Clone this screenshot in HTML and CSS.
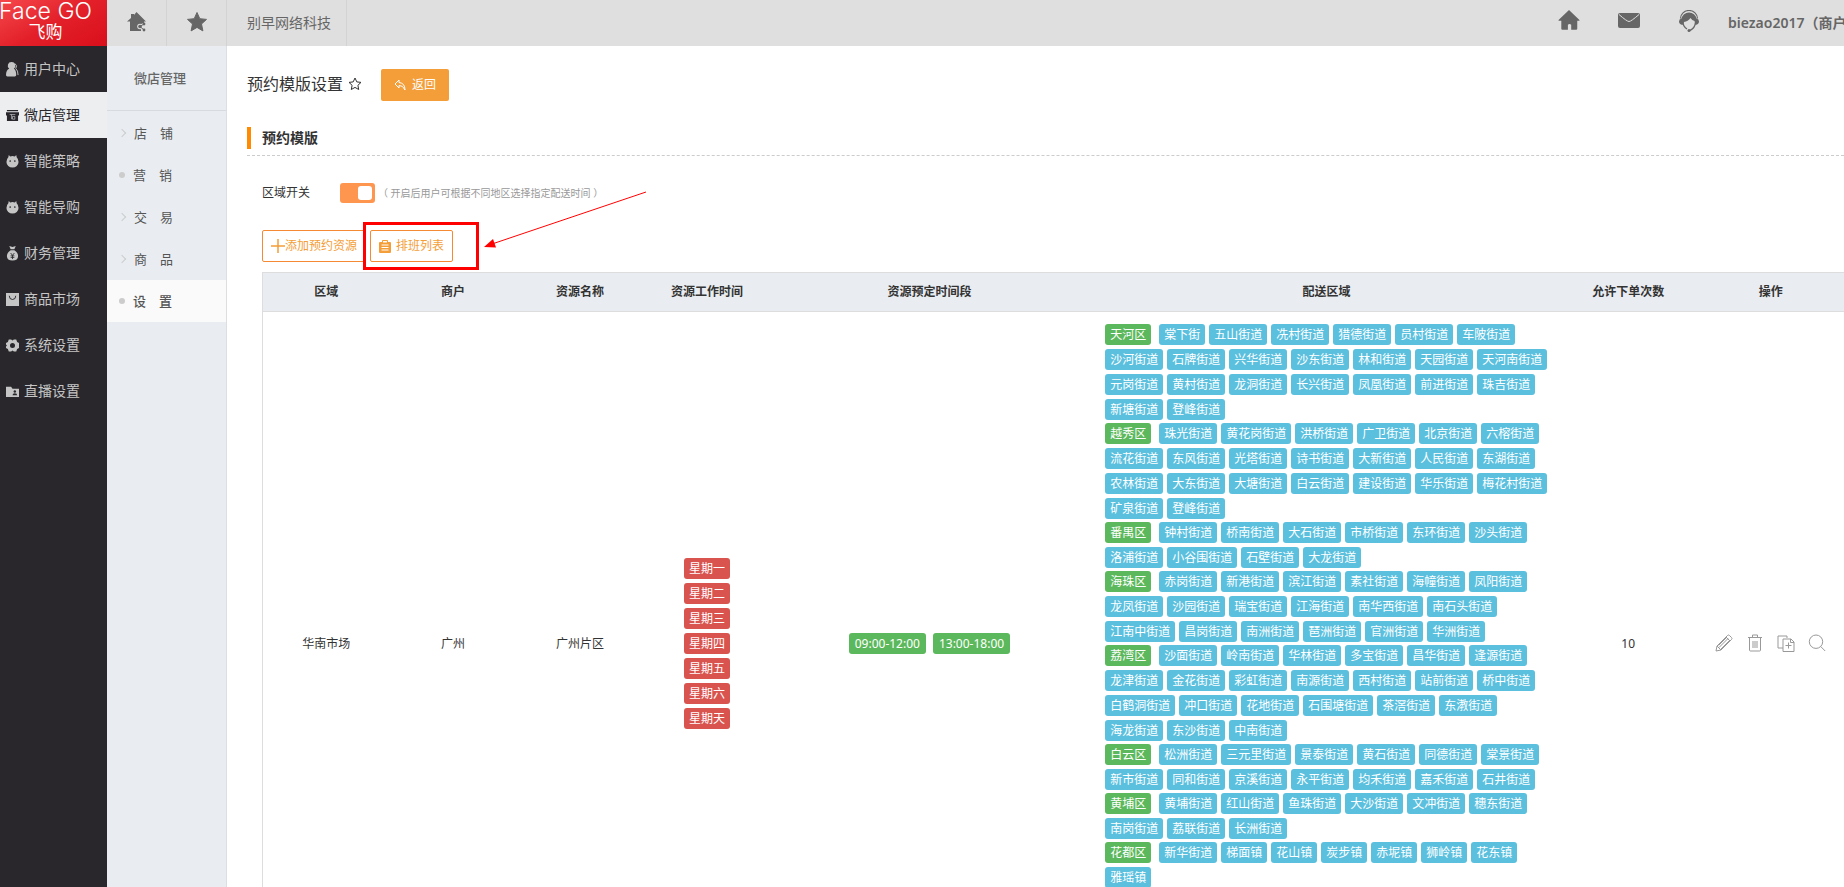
FILE: index.html
```
<!DOCTYPE html>
<html lang="zh-CN">
<head>
  <meta charset="UTF-8">
  <meta name="viewport" content="width=device-width, initial-scale=1.0">
  <title>预约模版设置</title>
  <link rel="stylesheet" href="styles.css">
</head>
<body>
  <div class="page">
    <!-- 左侧主菜单 -->
    <aside class="sidebar">
      <a class="logo" href="#">
        <span class="logo-en">Face GO</span>
        <span class="logo-cn">飞购</span>
      </a>
      <nav class="main-nav">
        <a href="#"><svg viewBox="0 0 14 16"><path d="M6 0a4 4 0 0 1 2.500 7.200Q11 8.500 11 14q0 1.500-1.500 1.500h-8Q0 15.500 0 14q0-5.500 3.500-6.800A4 4 0 0 1 6 0z"/><path d="M9.500 1.500a4 4 0 0 1 1 5.500q2.500 2 2.500 7" fill="none" stroke="currentColor"/></svg>用户中心</a>
        <a href="#" class="active"><svg viewBox="0 0 14 14"><path d="M1 1h12v1.500H1zM0 3.500h14V7h-1v6H1V7H0z"/><path d="M6 6v5M4 6h6M7 8h2.500v3H7z" fill="none" stroke="#eceef0" stroke-width=".6"/></svg>微店管理</a>
        <a href="#"><svg viewBox="0 0 14 14"><path d="M3 0l1.500 1.500Q7 .5 9.500 1.500L11 0l.5 2.500q2 2 2 5a6.500 6 0 0 1-13 0q0-3 2-5z"/><circle cx="4.500" cy="6.500" r=".9" fill="#29272b"/><circle cx="9.500" cy="6.500" r=".9" fill="#29272b"/></svg>智能策略</a>
        <a href="#"><svg viewBox="0 0 14 14"><path d="M3 0l1.500 1.500Q7 .5 9.500 1.500L11 0l.5 2.500q2 2 2 5a6.500 6 0 0 1-13 0q0-3 2-5z"/><circle cx="4.500" cy="6.500" r=".9" fill="#29272b"/><circle cx="9.500" cy="6.500" r=".9" fill="#29272b"/></svg>智能导购</a>
        <a href="#"><svg viewBox="0 0 14 16"><path d="M3.500 0L7 1l3.500-1L9 3.500H5zM5 4.500h4Q13 7 13 11q0 4.500-6 4.500T1 11q0-4 4-6.500z"/><path d="M5 7.500l2 2.500 2-2.500M7 10v4M5 10.500h4M5 12.200h4" fill="none" stroke="#29272b" stroke-width=".9"/></svg>财务管理</a>
        <a href="#"><svg viewBox="0 0 14 14"><path d="M0 0h14v14H0z"/><path d="M3.500 3q0 4 3.500 4t3.500-4" fill="none" stroke="#29272b"/></svg>商品市场</a>
        <a href="#"><svg viewBox="0 0 14 14"><path fill-rule="evenodd" d="M3 .5h2.500l1.500 1.200L8.500.5H11l1 2.700 2 1v5.600l-2 1-1 2.700H8.500L7 12.300l-1.500 1.200H3l-1-2.700-2-1V8l1-1-1-1V4.200l2-1zM7 4.300a2.700 2.700 0 1 0 0 5.400 2.700 2.700 0 0 0 0-5.400z"/></svg>系统设置</a>
        <a href="#"><svg viewBox="0 0 14 14"><path d="M0 2h5.500L7 4h7v9H0z"/><circle cx="9.500" cy="7" r="1.300" fill="#29272b"/><path d="M7 11q0-2 2.500-2t2.500 2z" fill="#29272b"/></svg>直播设置</a>
      </nav>
    </aside>

    <div class="wrapper">
      <!-- 顶部栏 -->
      <header class="topbar">
        <a href="#" class="top-tab tab-home" title="店铺首页"><svg viewBox="0 0 20 20"><path d="M9.500 0L19 9.500h-2V11a4 4 0 0 0-3 6.500v1.500H3V9.500H0L4 6V2h3v1z"/><circle cx="13" cy="14.500" r="2.800" fill="#dfdfdf"/><circle cx="13" cy="14.500" r="1.800"/><circle cx="17" cy="12" r="1.400"/><circle cx="17" cy="18" r="1.400"/><path d="M17 12l-4 2.500 4 3.500" fill="none" stroke="currentColor"/></svg></a>
        <a href="#" class="top-tab" title="收藏"><svg viewBox="0 0 20 20"><path d="M10 .5l2.800 6.200 6.700.7-5 4.600 1.400 6.900-5.900-3.500-5.900 3.500L5.500 12l-5-4.600 6.700-.7z" stroke="currentColor" stroke-linejoin="round"/></svg></a>
        <a href="#" class="top-company">别早网络科技</a>
        <div class="top-right">
          <a href="#" title="首页"><svg viewBox="0 0 20 20"><path d="M10 0l9.500 9q.5.800-1 .8h-1V17q0 1-1 1H12v-4.500a2 2 0 0 0-3 0V18H4q-1 0-1-1V9.800H1.500q-1.500 0-1-.8z"/></svg></a>
          <a href="#" title="消息"><svg viewBox="0 0 22 20"><rect x="0" y="2" width="22" height="15" rx="2"/><path d="M1 3.500q8 7 10 7t10-7" fill="none" stroke="#dfdfdf"/></svg></a>
          <a href="#" title="客服"><svg viewBox="0 0 22 22"><path d="M2.500 8.500a8.500 8 0 0 1 17 0" fill="none" stroke="currentColor" stroke-width="1.200"/><path d="M11 2.500a7.500 7 0 0 1 7.500 6q2.500.5 2.500 3t-3.500 3.500L16.500 11Q14 10.500 12.500 8 10 11.500 6 12l-1.500 3Q1 14 1 11.500t2.500-3a7.500 7 0 0 1 7.500-6z"/><path d="M5 12q0 4.500 4 7M17.500 12.500Q17 18 12 20.500" fill="none" stroke="currentColor" stroke-width="1.400"/><circle cx="11" cy="20.500" r="1.500"/></svg></a>
          <span class="user">biezao2017（商户）</span>
        </div>
      </header>

      <div class="body">
        <!-- 二级菜单 -->
        <nav class="sub-nav">
          <h2>微店管理</h2>
          <a href="#" class="arrow">店　铺</a>
          <a href="#" class="dot">营　销</a>
          <a href="#" class="arrow">交　易</a>
          <a href="#" class="arrow">商　品</a>
          <a href="#" class="dot active">设　置</a>
        </nav>

        <main class="content">
          <div class="page-title">
            <h1>预约模版设置</h1>
            <svg class="star" viewBox="0 0 14 14"><path d="M7 1l1.800 3.900 4.200.5-3.100 2.900.8 4.200L7 10.400l-3.700 2.100.8-4.200L1 5.400l4.200-.5z"/></svg>
            <button type="button" class="btn-back"><svg viewBox="0 0 12 12"><path d="M5 1L1 5l4 4V6.500q4-.5 6 4.500 0-7-6-7.500z"/></svg>返回</button>
          </div>

          <h3 class="section-title"><span>预约模版</span></h3>

          <div class="panel">
            <div class="switch-row">
              <label for="area-switch">区域开关</label>
              <input type="checkbox" id="area-switch" class="switch" checked>
              <span class="hint">（ 开启后用户可根据不同地区选择指定配送时间 ）</span>
            </div>

            <div class="toolbar">
              <button type="button" class="btn-line btn-add"><svg viewBox="0 0 14 14"><path d="M7 0v14M0 7h14" fill="none" stroke="currentColor" stroke-width="1.500"/></svg>添加预约资源</button>
              <div class="marked">
                <button type="button" class="btn-line btn-list"><svg viewBox="0 0 12 14"><path fill-rule="evenodd" d="M0 4q0-1 1-1h2V2q0-1 1-1h4q1 0 1 1v1h2q1 0 1 1v9q0 1-1 1H1q-1 0-1-1zM4 2v1.500h4V2zM2.500 5.500v1h7v-1zM2.500 8v1h7V8zM2.500 10.500v1h7v-1z"/></svg>排班列表</button>
                <div class="mark-box"></div>
                <svg class="mark-arrow" viewBox="0 0 164 58"><path d="M162 1L8 53" fill="none" stroke="#f00"/><path d="M0 56l9-8 3 8.500z" fill="#f00"/></svg>
              </div>
            </div>

            <table class="resource-table">
              <thead>
                <tr>
                  <th class="w8">区域</th>
                  <th class="w8">商户</th>
                  <th class="w8">资源名称</th>
                  <th class="w8">资源工作时间</th>
                  <th class="w20">资源预定时间段</th>
                  <th class="w30">配送区域</th>
                  <th class="w8">允许下单次数</th>
                  <th class="w10">操作</th>
                </tr>
              </thead>
              <tbody>
                <tr>
                  <td>华南市场</td>
                  <td>广州</td>
                  <td>广州片区</td>
                  <td>
                    <div class="days">
                      <span class="tag red">星期一</span>
                      <span class="tag red">星期二</span>
                      <span class="tag red">星期三</span>
                      <span class="tag red">星期四</span>
                      <span class="tag red">星期五</span>
                      <span class="tag red">星期六</span>
                      <span class="tag red">星期天</span>
                    </div>
                  </td>
                  <td>
                    <div class="times">
                      <span class="tag green">09:00-12:00</span>
                      <span class="tag green">13:00-18:00</span>
                    </div>
                  </td>
                  <td class="areas" id="areas"></td>
                  <td>10</td>
                  <td>
                    <div class="actions">
                      <a href="#" title="编辑"><svg viewBox="0 0 18 18"><path d="M1 17l1-5L12.500 1.500q1-1 2 0l2 2q1 1 0 2L6 16zM2 12l4 4M11 3l4 4M4 13.500l9-9M3.500 11.500l8.500-8.500M6 15l8.500-8.500"/></svg></a>
                      <a href="#" title="删除"><svg viewBox="0 0 18 18"><path d="M2 3.500h14M6.500 3V1h5v2M3.500 3.500V16q0 1 1 1h9q1 0 1-1V3.500M7 7v7M9 7v7M11 7v7"/></svg></a>
                      <a href="#" title="复制"><svg viewBox="0 0 18 18"><path d="M6 14H1V2h9v2M6 5h8l3 3v9.500H6zM13.500 5v3.500H17M11.500 8.500v6M8.500 11.500h6"/></svg></a>
                      <a href="#" title="查看"><svg viewBox="0 0 18 18"><path d="M8 1a6.700 6.700 0 1 0 0 13.400A6.700 6.700 0 0 0 8 1zM12.700 12.500l4.500 4.500"/></svg></a>
                    </div>
                  </td>
                </tr>
              </tbody>
            </table>
          </div>
        </main>
      </div>
    </div>
  </div>

  <script src="areas.js"></script>
</body>
</html>
```

FILE: areas.js
```
// 配送区域
const areas = {
  '天河区': '棠下街 五山街道 冼村街道 猎德街道 员村街道 车陂街道 沙河街道 石牌街道 兴华街道 沙东街道 林和街道 天园街道 天河南街道 元岗街道 黄村街道 龙洞街道 长兴街道 凤凰街道 前进街道 珠吉街道 新塘街道 登峰街道',
  '越秀区': '珠光街道 黄花岗街道 洪桥街道 广卫街道 北京街道 六榕街道 流花街道 东风街道 光塔街道 诗书街道 大新街道 人民街道 东湖街道 农林街道 大东街道 大塘街道 白云街道 建设街道 华乐街道 梅花村街道 矿泉街道 登峰街道',
  '番禺区': '钟村街道 桥南街道 大石街道 市桥街道 东环街道 沙头街道 洛浦街道 小谷围街道 石壁街道 大龙街道',
  '海珠区': '赤岗街道 新港街道 滨江街道 素社街道 海幢街道 凤阳街道 龙凤街道 沙园街道 瑞宝街道 江海街道 南华西街道 南石头街道 江南中街道 昌岗街道 南洲街道 琶洲街道 官洲街道 华洲街道',
  '荔湾区': '沙面街道 岭南街道 华林街道 多宝街道 昌华街道 逢源街道 龙津街道 金花街道 彩虹街道 南源街道 西村街道 站前街道 桥中街道 白鹤洞街道 冲口街道 花地街道 石围塘街道 茶滘街道 东漖街道 海龙街道 东沙街道 中南街道',
  '白云区': '松洲街道 三元里街道 景泰街道 黄石街道 同德街道 棠景街道 新市街道 同和街道 京溪街道 永平街道 均禾街道 嘉禾街道 石井街道',
  '黄埔区': '黄埔街道 红山街道 鱼珠街道 大沙街道 文冲街道 穗东街道 南岗街道 荔联街道 长洲街道',
  '花都区': '新华街道 梯面镇 花山镇 炭步镇 赤坭镇 狮岭镇 花东镇 雅瑶镇'
};

document.getElementById('areas').innerHTML = Object.keys(areas).map(name => `
  <div class="district">
    <span class="tag green">${name}</span>
    ${areas[name].split(' ').map(street => `<span class="tag blue">${street}</span>`).join('')}
  </div>
`).join('');
```

FILE: styles.css
```
* {
  box-sizing: border-box;
}
html,
body {
  height: 100%;
  overflow: hidden;
}
body {
  margin: 0;
  font-family: "Noto Sans", "Noto Sans CJK SC", sans-serif;
  font-size: 12px;
  line-height: 20px;
  color: #333;
  background: #fff;
}
h1, h2, h3 {
  margin: 0;
}
a {
  color: inherit;
  text-decoration: none;
}
button {
  font: inherit;
  cursor: pointer;
}
svg {
  flex: none;
  fill: currentColor;
}

.page {
  display: flex;
  min-height: 100%;
}
.wrapper {
  flex: 1;
  min-width: 0;
  display: flex;
  flex-direction: column;
}
.body {
  flex: 1;
  display: flex;
}

/* 主菜单 */
.sidebar {
  flex: none;
  width: 107px;
  background: #29272b;
}
.logo {
  display: flex;
  flex-direction: column;
  align-items: center;
  height: 46px;
  padding-right: 16px;
  color: #fff;
  background: linear-gradient(150deg, #f5484c, #e3202a 50%, #d90f1b);
}
.logo-en {
  font-family: Inter, sans-serif;
  font-size: 23px;
  font-weight: 300;
  line-height: 22px;
  white-space: nowrap;
}
.logo-cn {
  font-size: 17px;
  line-height: 20px;
}
.main-nav a {
  display: flex;
  align-items: center;
  gap: 5px;
  height: 46px;
  padding-left: 6px;
  font-size: 14px;
  color: #c5c5c6;
}
.main-nav a.active {
  color: #29272b;
  background: #eceef0;
}
.main-nav svg {
  width: 13px;
  height: 15px;
}

/* 顶部栏 */
.topbar {
  display: flex;
  height: 46px;
  color: #666;
  background: #dfdfdf;
}
.topbar > a {
  display: flex;
  align-items: center;
  justify-content: center;
  border-right: 1px solid #d3d3d3;
}
.top-tab {
  width: 60px;
}
.top-tab svg {
  width: 20px;
  height: 20px;
  margin-bottom: 2px;
}
.topbar .top-company {
  justify-content: flex-start;
  width: 120px;
  padding-left: 20px;
  font-size: 14px;
}
.top-right {
  display: flex;
  align-items: center;
  gap: 38px;
  margin-left: auto;
}
.top-right a {
  display: flex;
}
.top-right svg {
  width: 22px;
  height: 22px;
  margin-bottom: 4px;
}
.user {
  width: 116px;
  margin-left: -10px;
  overflow: hidden;
  white-space: nowrap;
  font-size: 14px;
  font-weight: 600;
}

/* 二级菜单 */
.sub-nav {
  flex: none;
  width: 120px;
  background: #e9edf1;
  border-right: 1px solid #dcdfe2;
}
.sub-nav h2 {
  height: 65px;
  padding-left: 27px;
  font-size: 13px;
  font-weight: 500;
  line-height: 64px;
  color: #666;
  border-bottom: 1px solid #d8dbde;
}
.sub-nav a {
  display: flex;
  align-items: center;
  height: 42px;
  padding: 0 0 1px 12px;
  font-size: 13px;
  color: #555;
}
.sub-nav h2 + a {
  margin-top: 1px;
}
.sub-nav a.active {
  font-weight: 500;
  background: #fafafa;
}
.sub-nav a::before {
  content: "";
  flex: none;
}
.sub-nav .arrow::before {
  width: 5px;
  height: 5px;
  margin-right: 9px;
  border: solid #ccc;
  border-width: 1px 1px 0 0;
  transform: rotate(45deg);
}
.sub-nav .dot::before {
  width: 6px;
  height: 6px;
  margin-right: 8px;
  border-radius: 50%;
  background: #ccc;
}

/* 内容 */
.content {
  flex: 1;
  min-width: 0;
  padding: 23px 0 0 20px;
}
.page-title {
  display: flex;
  align-items: center;
  height: 32px;
}
.page-title h1 {
  padding-bottom: 3px;
  font-size: 16px;
  font-weight: 400;
}
.star {
  width: 14px;
  height: 14px;
  margin: 0 19px 2px 5px;
  fill: none;
  stroke: #333;
}
.btn-back {
  display: flex;
  align-items: center;
  justify-content: center;
  gap: 6px;
  width: 68px;
  height: 32px;
  padding: 0;
  color: #fff;
  background: #f49e39;
  border: 0;
  border-radius: 2px;
}
.btn-back svg {
  width: 12px;
  height: 12px;
  fill: none;
  stroke: currentColor;
}
.section-title {
  margin-top: 26px;
  padding-bottom: 6px;
  font-size: 14px;
  line-height: 22px;
  border-bottom: 1px dashed #ccc;
}
.section-title span {
  display: block;
  padding-left: 11px;
  border-left: 4px solid #ff8a00;
}
.panel {
  margin-right: -7px;
  padding-left: 15px;
}
.switch-row {
  display: flex;
  align-items: center;
  margin-top: 27px;
}
.switch {
  appearance: none;
  display: flex;
  justify-content: flex-end;
  width: 35px;
  height: 20px;
  margin: 0 3px 0 30px;
  padding: 3px;
  background: #ff9650;
  border-radius: 3px;
}
.switch:not(:checked) {
  justify-content: flex-start;
  background: #ccc;
}
.switch::before {
  content: "";
  width: 14px;
  height: 14px;
  background: #fff;
  border-radius: 3px;
}
.hint {
  font-size: 10px;
  color: #999;
}
.toolbar {
  display: flex;
  gap: 4px;
  margin: 27px 0 10px;
}
.btn-line {
  display: flex;
  align-items: center;
  height: 32px;
  padding: 0 8px;
  color: #f49e39;
  background: #fff;
  border: 1px solid #f58a35;
  border-radius: 2px;
}
.btn-add svg {
  width: 14px;
  height: 14px;
}
.btn-list {
  gap: 5px;
}
.btn-list svg {
  width: 12px;
  height: 14px;
}

/* 红框和箭头标注 */
.marked {
  position: relative;
}
.mark-box {
  position: absolute;
  top: -8px;
  left: -7px;
  width: 116px;
  height: 48px;
  border: 3px solid #f00;
  pointer-events: none;
}
.mark-arrow {
  position: absolute;
  top: -39px;
  left: 114px;
  width: 164px;
  height: 58px;
  pointer-events: none;
}

/* 表格 */
.resource-table {
  width: 100%;
  table-layout: fixed;
  border-collapse: collapse;
  border: 1px solid #ddd;
}
.resource-table th {
  height: 39px;
  padding: 0;
  background: #e9edf1;
  border-bottom: 1px solid #ddd;
}
.resource-table td {
  height: 664px;
  padding: 0;
  text-align: center;
}
.w8 {
  width: 8%;
}
.w10 {
  width: 10%;
}
.w20 {
  width: 20%;
}
.w30 {
  width: 30%;
}
.tag {
  height: 21px;
  padding: 0 5px;
  line-height: 21px;
  color: #fff;
  white-space: nowrap;
  border-radius: 3px;
}
.red {
  background: #d9534f;
}
.green {
  background: #5cb85c;
}
.blue {
  background: #5bc0de;
}
.days {
  display: flex;
  flex-direction: column;
  align-items: center;
  gap: 4px;
}
.times {
  display: flex;
  justify-content: center;
  gap: 7px;
}
.times .tag {
  padding: 0 6px;
}
.resource-table .areas {
  padding: 12px 17px;
  vertical-align: top;
}
.district {
  display: flex;
  flex-wrap: wrap;
  gap: 4px;
  margin-bottom: 3px;
}
.district .green {
  margin-right: 4px;
}
.actions {
  display: flex;
  justify-content: center;
  gap: 13px;
  padding-bottom: 2px;
  color: #999;
}
.actions a {
  display: flex;
}
.actions svg {
  width: 18px;
  height: 18px;
  fill: none;
  stroke: currentColor;
}
```
